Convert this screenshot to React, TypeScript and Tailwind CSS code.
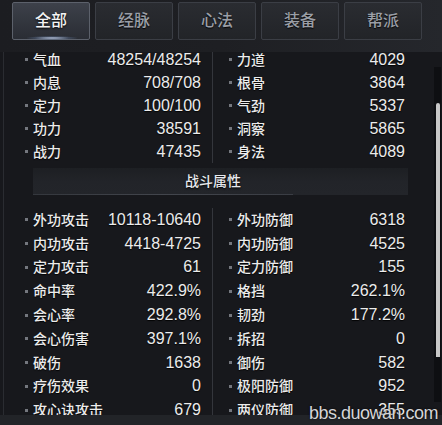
import React from "react";

const topRows: [string, string, string, string][] = [
  ["气血", "48254/48254", "力道", "4029"],
  ["内息", "708/708", "根骨", "3864"],
  ["定力", "100/100", "气劲", "5337"],
  ["功力", "38591", "洞察", "5865"],
  ["战力", "47435", "身法", "4089"],
];

const bottomRows: [string, string, string, string][] = [
  ["外功攻击", "10118-10640", "外功防御", "6318"],
  ["内功攻击", "4418-4725", "内功防御", "4525"],
  ["定力攻击", "61", "定力防御", "155"],
  ["命中率", "422.9%", "格挡", "262.1%"],
  ["会心率", "292.8%", "韧劲", "177.2%"],
  ["会心伤害", "397.1%", "拆招", "0"],
  ["破伤", "1638", "御伤", "582"],
  ["疗伤效果", "0", "极阳防御", "952"],
  ["攻心诀攻击", "679", "两仪防御", "355"],
];

const tabs = ["全部", "经脉", "心法", "装备", "帮派"];

function Row({ label, value, h, right }: { label: string; value: string; h: string; right?: boolean }) {
  return (
    <div className={`flex items-center ${h}`}>
      <span className={`w-[3px] h-[3px] bg-[#74777e] shrink-0 ${right ? "ml-[16px]" : "ml-[4px]"}`} />
      <span className="ml-[5px] text-[14px] font-medium text-[#ececec] [text-shadow:0_1px_1px_rgba(0,0,0,0.9)]">{label}</span>
      <span
        className={`ml-auto text-[16px] text-[#ececec] [text-shadow:0_1px_1px_rgba(0,0,0,0.9)] ${right ? "mr-[5px]" : "mr-[11px]"}`}
      >
        {value}
      </span>
    </div>
  );
}

function Section({ rows, h, className }: { rows: [string, string, string, string][]; h: string; className?: string }) {
  return (
    <div className={`flex ${className ?? ""}`}>
      <div className="w-[192px] border-r border-[#34363c]">
        {rows.map((r) => (
          <Row key={r[0]} label={r[0]} value={r[1]} h={h} />
        ))}
      </div>
      <div className="w-[197px]">
        {rows.map((r) => (
          <Row key={r[2]} label={r[2]} value={r[3]} h={h} right />
        ))}
      </div>
    </div>
  );
}

export default function App() {
  return (
    <div
      className="w-[442px] h-[425px] relative overflow-hidden bg-[#17181c] flex flex-col leading-none"
      style={{ fontFamily: '"Liberation Sans", "Noto Sans CJK SC", sans-serif' }}
    >
      {/* header with tabs */}
      <div className="h-[52px] shrink-0 bg-gradient-to-r from-[#1c1d21] via-[#1e1f23] to-[#25272c] flex gap-[5px] pl-[12px] pt-[2px]">
        {tabs.map((t, i) => (
          <div
            key={t}
            className={`relative w-[78px] h-[38px] rounded-[2px] border flex items-center justify-center text-[16px] font-medium ${
              i === 0
                ? "border-[#5c616b] bg-gradient-to-b from-[#3d414a] to-[#2a2d34] text-[#f4f4f4] [text-shadow:0_1px_2px_rgba(0,0,0,0.9)]"
                : "border-[#3b3e45] bg-gradient-to-b from-[#2a2c31] to-[#222428] text-[#9a9ea6] [text-shadow:0_1px_1px_rgba(0,0,0,0.9)]"
            }`}
          >
            {t}
            {i === 0 && (
              <div className="absolute bottom-[-1px] left-[14px] w-[50px] h-[4px] bg-[radial-gradient(ellipse_at_center,rgba(210,225,255,0.85),rgba(120,150,200,0.25)_50%,transparent_75%)]" />
            )}
          </div>
        ))}
      </div>

      {/* scrolling content */}
      <div className="flex-1 overflow-hidden ml-[3px] border-l border-[#2a2c31]">
        <div className="-mt-[4px] pl-[17px]">
          <Section rows={topRows} h="h-[23px]" />
          <div className="mt-[5px] ml-[12px] w-[375px] h-[27px] bg-gradient-to-b from-[#1d1f23] via-[#222429] to-[#23252a] flex flex-col">
            <div className="flex-1 flex items-center justify-center pr-[15px] text-[14px] font-medium text-[#e8eaee] [text-shadow:0_1px_2px_rgba(0,0,0,1)]">
              战斗属性
            </div>
            <div className="h-[1px] w-[260px] bg-gradient-to-r from-[#34373d] via-[#43464d] to-[#3a3d44]" />
          </div>
          <Section rows={bottomRows} h="h-[23.8px]" className="pt-[13px]" />
        </div>
      </div>

      {/* footer band */}
      <div className="h-[10px] shrink-0 bg-[#222428]" />

      {/* scrollbar */}
      <div className="absolute left-[434px] top-[67px] w-[7px] h-[335px] bg-[#0e0f12]" />
      <div className="absolute left-[436px] top-[103px] w-[4px] h-[254px] bg-[#c8c8c8] rounded-t-[2px]" />

      {/* watermark */}
      <div className="absolute left-[309px] top-[403px] text-[18px] tracking-[-0.5px] leading-[20px] text-[#d4d5d7] [text-shadow:0_0_2px_rgba(0,0,0,0.9)]">
        bbs.duowan.com
      </div>
    </div>
  );
}
